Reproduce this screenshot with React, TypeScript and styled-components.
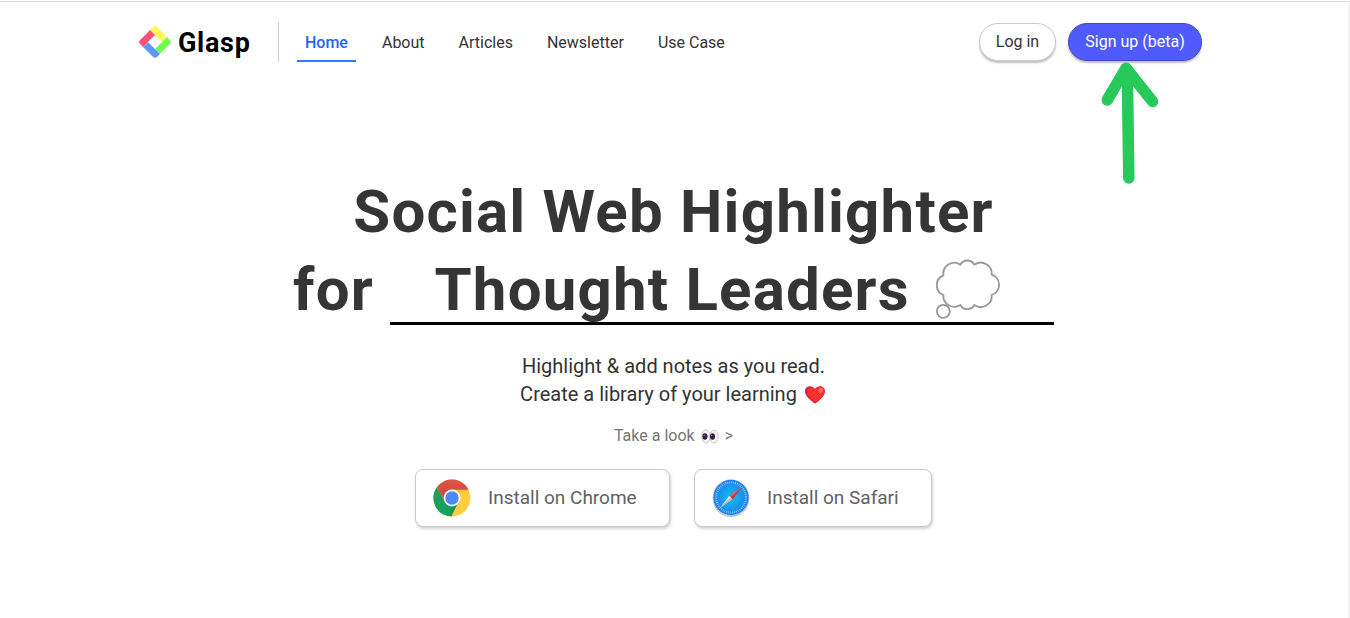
import React from "react";
import styled, { createGlobalStyle } from "styled-components";

const GlobalStyle = createGlobalStyle`
  *, *::before, *::after { box-sizing: border-box; }
  body {
    margin: 0;
    background: #fff;
    color: #333;
    font-family: Roboto, "Liberation Sans", sans-serif;
    overflow: hidden;
  }
`;

const Page = styled.div`
  height: 618px;
  padding-top: 1px;
`;

const Frame = styled.div`
  height: 617px;
  border-top: 1px solid #d9dcdc;
  border-right: 2px solid #f1f1f1;
`;

const Header = styled.header`
  display: flex;
  align-items: center;
  height: 80px;
  padding: 0 146px 0 138px;
`;

const Brand = styled.a`
  display: flex;
  align-items: center;
  gap: 6px;
  width: 141px;
  height: 40px;
  border-right: 1px solid #ccc;
  color: #000;
`;

const BrandName = styled.span`
  padding-top: 2px;
  font-size: 27px;
  font-weight: 700;
  line-height: 40px;
  letter-spacing: 0.7px;
`;

const Nav = styled.nav`
  display: flex;
  gap: 18px;
  margin-left: 18px;
`;

const NavLink = styled.a<{ $active?: boolean }>`
  height: 40px;
  padding: 0 8px;
  border-bottom: 2px solid ${(p) => (p.$active ? "#2b7bff" : "transparent")};
  color: ${(p) => (p.$active ? "#2563ff" : "#333")};
  font-size: 16px;
  font-weight: ${(p) => (p.$active ? 500 : 400)};
  line-height: 41px;
  white-space: nowrap;
`;

const Actions = styled.div`
  display: flex;
  gap: 12px;
  margin-left: auto;
`;

const PillButton = styled.button<{ $primary?: boolean }>`
  width: ${(p) => (p.$primary ? 134 : 77)}px;
  height: 38px;
  padding: 0 0 2px;
  border: 1px solid ${(p) => (p.$primary ? "#4048cf" : "#ccc")};
  border-radius: 19px;
  background: ${(p) => (p.$primary ? "#4f5bff" : "#fff")};
  box-shadow: 0 2px 2px rgba(0, 0, 0, 0.25);
  color: ${(p) => (p.$primary ? "#fff" : "#333")};
  font: 400 16px Roboto, "Liberation Sans", sans-serif;
  white-space: nowrap;
`;

const PointerArrow = styled.svg`
  position: absolute;
  left: 1096px;
  top: 58px;
`;

const Hero = styled.main`
  display: flex;
  flex-direction: column;
  align-items: center;
  padding: 91px 1px 0 0;
`;

const Title = styled.h1`
  display: flex;
  flex-direction: column;
  align-items: center;
  margin: 0;
  color: #353535;
  font-size: 60px;
  font-weight: 700;
  line-height: 78px;
  letter-spacing: 1.2px;
  white-space: nowrap;
`;

const AudienceLine = styled.span`
  display: flex;
  gap: 16px;
`;

const Audience = styled.span`
  display: flex;
  align-items: flex-start;
  gap: 25px;
  width: 664px;
  height: 74px;
  padding-left: 44.5px;
  border-bottom: 3px solid #000;
`;

const Lead = styled.p`
  margin: 23px 0 0;
  font-size: 20px;
  line-height: 28px;
  text-align: center;
`;

const LeadLine = styled.span`
  display: flex;
  align-items: center;
  justify-content: center;
  gap: 7px;
`;

const LookLink = styled.a`
  display: flex;
  align-items: center;
  gap: 6px;
  margin-top: 16px;
  color: #757575;
  font-size: 16px;
  line-height: 24px;
`;

const InstallRow = styled.div`
  display: flex;
  gap: 24px;
  margin-top: 21px;
`;

const InstallButton = styled.button<{ $width: number }>`
  display: flex;
  align-items: center;
  gap: 17px;
  width: ${(p) => p.$width}px;
  height: 58px;
  padding: 0 17px;
  border: 1px solid #c8c8c8;
  border-radius: 8px;
  background: #fff;
  box-shadow: 1px 2px 3px rgba(0, 0, 0, 0.18);
  color: #616161;
  font: 400 19px Roboto, "Liberation Sans", sans-serif;
  white-space: nowrap;
`;

const InstallLabel = styled.span`
  padding-bottom: 2px;
`;

const BubbleIcon = styled.svg`
  margin-top: 6px;
`;

const HeartIcon = styled.svg`
  margin: 1px 1px 0 0;
`;

const LogoMark = () => (
  <svg width="34" height="34" viewBox="0 0 34 34">
    <g transform="translate(17 17) rotate(45) translate(-12 -12)">
      <path fill="#fff75a" d="M3 0H17V7H0V3A3 3 0 0 1 3 0Z" />
      <path fill="#72fd50" d="M17 0H21A3 3 0 0 1 24 3V17H17Z" />
      <path fill="#5c98ff" d="M24 17V21A3 3 0 0 1 21 24H7V17Z" />
      <path fill="#ff5076" d="M0 7H7V24H3A3 3 0 0 1 0 21Z" />
    </g>
  </svg>
);

const ThoughtBubble = () => (
  <BubbleIcon width="66" height="66" viewBox="29 20 198 198">
    <g fill="#fff" stroke="#999" strokeWidth="5.5">
      <path d="M54 75A33 33 0 0 1 105 43A24 24 0 0 1 147 43A33 33 0 0 1 199 73A32 32 0 0 1 199 134A33 33 0 0 1 147 164A24 24 0 0 1 105 164A33 33 0 0 1 54 134A32 32 0 0 1 54 75Z" />
      <circle cx="54" cy="183" r="19.5" />
    </g>
  </BubbleIcon>
);

const Heart = () => (
  <HeartIcon width="22" height="20" viewBox="0 0 22 20">
    <path fill="#df1f45" d="M11 18.6C7 15.8 1 11.4 1 6.2C1 .6 8.3 -.3 11 4C13.7 -.3 21 .6 21 6.2C21 11.4 15 15.8 11 18.6Z" />
    <path fill="#f8312f" d="M12 17.3C8 14.5 3.4 10.5 3.4 6.2C3.4 1.8 9.2 1.2 11 5.2C13.5 .2 20.8 1 20.5 6.3C20.2 11.2 15 15 12 17.3Z" />
    <ellipse cx="16.8" cy="5.4" rx="2.7" ry="2" fill="#ff6b70" transform="rotate(-50 16.8 5.4)" />
  </HeartIcon>
);

const Eyes = () => (
  <svg width="18" height="16" viewBox="0 0 18 16">
    <g fill="#f5f5f5" stroke="#c9c5cd" strokeWidth="1">
      <ellipse cx="4.9" cy="8.5" rx="4.2" ry="6.5" />
      <ellipse cx="13.1" cy="8.5" rx="4.2" ry="6.5" />
    </g>
    <ellipse cx="3.9" cy="8.5" rx="2.5" ry="3.3" fill="#321b41" />
    <ellipse cx="11.5" cy="8.5" rx="2.5" ry="3.3" fill="#321b41" />
    <circle cx="3.2" cy="7.2" r=".5" fill="#fff" />
    <circle cx="10.8" cy="7.2" r=".5" fill="#fff" />
  </svg>
);

const ChromeIcon = () => (
  <svg width="38" height="38" viewBox="0 0 38 38">
    <defs>
      <linearGradient id="cr" x1="0" y1="0" x2="0" y2="1">
        <stop offset="0" stopColor="#de5448" />
        <stop offset="1" stopColor="#c8453a" />
      </linearGradient>
    </defs>
    <circle cx="19" cy="19" r="18.5" fill="#ffcd40" />
    <path fill="#18a05e" d="M3.9 8.3L12 23L19 26.5L25.4 23L18.2 37.5A18.5 18.5 0 0 1 3.9 8.3Z" />
    <path fill="#0f8a4c" opacity=".45" d="M18.2 37.5L25.4 23L19 27L16.5 34Z" />
    <path fill="url(#cr)" d="M3.9 8.3A18.5 18.5 0 0 1 35.6 10.8H19L11.5 22Z" />
    <path fill="#d9a62c" opacity=".35" d="M19 10.8H35.6L25 14Z" />
    <circle cx="19" cy="19" r="8.4" fill="#f4f6f8" />
    <circle cx="19" cy="19" r="6.7" fill="#4c8bf5" />
  </svg>
);

const SafariIcon = () => (
  <svg width="38" height="40" viewBox="0 0 38 40">
    <defs>
      <radialGradient id="sf">
        <stop offset="0" stopColor="#08c4ee" />
        <stop offset="1" stopColor="#247cf0" />
      </radialGradient>
    </defs>
    <circle cx="19" cy="20.8" r="18.3" fill="#aaa" opacity=".7" />
    <circle cx="19" cy="19.5" r="18.3" fill="#d5d9dd" />
    <circle cx="19" cy="19.5" r="17.7" fill="url(#sf)" />
    <circle cx="19" cy="19.5" r="15" fill="none" stroke="#b6e2fb" strokeWidth="2" strokeDasharray=".65 1.309" />
    <path fill="#e9e9e9" d="M17.2 17.7L7.5 30.6L19 19.5Z" />
    <path fill="#b9bcc0" d="M7.5 30.6L20.8 21.3L19 19.5Z" />
    <path fill="#ff5150" d="M30.5 8.4L17.2 17.7L19 19.5Z" />
    <path fill="#cf3033" d="M30.5 8.4L20.8 21.3L19 19.5Z" />
  </svg>
);

const links = ["Home", "About", "Articles", "Newsletter", "Use Case"];

export default function App() {
  return (
    <Page>
      <GlobalStyle />
      <Frame>
        <Header>
          <Brand>
            <LogoMark />
            <BrandName>Glasp</BrandName>
          </Brand>
          <Nav>
            {links.map((label) => (
              <NavLink key={label} $active={label === "Home"}>
                {label}
              </NavLink>
            ))}
          </Nav>
          <Actions>
            <PillButton>Log in</PillButton>
            <PillButton $primary>Sign up (beta)</PillButton>
          </Actions>
        </Header>
        <Hero>
          <Title>
            <span>Social Web Highlighter</span>
            <AudienceLine>
              <span>for</span>
              <Audience>
                <span>Thought Leaders</span>
                <ThoughtBubble />
              </Audience>
            </AudienceLine>
          </Title>
          <Lead>
            <LeadLine>Highlight &amp; add notes as you read.</LeadLine>
            <LeadLine>
              Create a library of your learning <Heart />
            </LeadLine>
          </Lead>
          <LookLink>
            <span>Take a look</span>
            <Eyes />
            <span>&gt;</span>
          </LookLink>
          <InstallRow>
            <InstallButton $width={255}>
              <ChromeIcon />
              <InstallLabel>Install on Chrome</InstallLabel>
            </InstallButton>
            <InstallButton $width={238}>
              <SafariIcon />
              <InstallLabel>Install on Safari</InstallLabel>
            </InstallButton>
          </InstallRow>
        </Hero>
      </Frame>
      <PointerArrow width="68" height="130" viewBox="0 0 68 130">
        <g fill="none" stroke="#26c95a" strokeWidth="11.5" strokeLinecap="round" strokeLinejoin="round">
          <path d="M11.3 42L30 10.2L56.6 43.5" />
          <path d="M31.3 14L32.8 120" />
        </g>
      </PointerArrow>
    </Page>
  );
}
